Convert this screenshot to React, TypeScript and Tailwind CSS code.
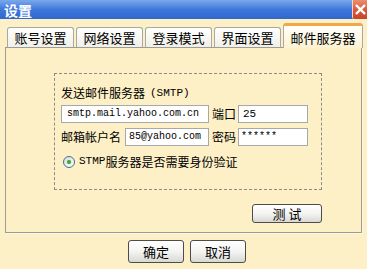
import clsx from 'clsx'

const TABS = ['账号设置', '网络设置', '登录模式', '界面设置']

const cjk = "font-['SimSun','Noto_Sans_CJK_SC',sans-serif]"
const mono = "font-['Liberation_Mono','Noto_Sans_CJK_SC',monospace]"

function XpButton({ label, className }: { label: string; className?: string }) {
  return (
    <button
      type="button"
      className={clsx(
        'flex items-center justify-center rounded-[3px] border border-[#4c4c4c] bg-gradient-to-b from-white via-[#f4f4f2] to-[#d8d8d4] text-[13px] leading-none text-black',
        cjk,
        className,
      )}
    >
      {label}
    </button>
  )
}

export default function App() {
  return (
    <div className={clsx('flex h-[269px] w-[367px] flex-col overflow-hidden bg-[#fdefc6]', cjk)}>
      {/* title bar */}
      <div className="flex h-[19px] shrink-0 items-center justify-between bg-gradient-to-b from-[#7aa8ec] via-[#3f78da] to-[#2f67ce]">
        <span className="pl-[4px] text-[14px] font-bold leading-none text-white">设置</span>
        <div className="flex h-[19px] w-[15px] items-center justify-start overflow-hidden rounded-bl-[2px] border-l border-[#f6d4c8] bg-gradient-to-b from-[#ec8e70] via-[#d95a3c] to-[#c8442a] pl-[1px]">
          <svg width="15" height="13" viewBox="0 0 15 13">
            <path d="M3 2 L12 11 M12 2 L3 11" stroke="white" strokeWidth="2.6" strokeLinecap="round" />
          </svg>
        </div>
      </div>

      {/* tabs */}
      <div className="mt-[4px] flex h-[24px] items-end pl-[7px]">
        {TABS.map((t) => (
          <div
            key={t}
            className="mr-[2px] flex h-[20px] w-[67px] items-center justify-center rounded-t-[3px] border border-b-0 border-[#a9a9a0] bg-gradient-to-b from-white to-[#f0efe8] text-[13px] leading-none text-black"
          >
            {t}
          </div>
        ))}
        <div className="relative z-10 -mb-px flex h-[25px] w-[80px] items-center justify-center rounded-t-[3px] border border-b-0 border-[#a9a9a0] border-t-[3px] border-t-[#f0a848] bg-gradient-to-b from-[#fffffb] to-[#fdf3d2] pt-[1px] text-[13px] leading-none text-black">
          邮件服务器
        </div>
      </div>

      {/* panel */}
      <div className="ml-[5px] flex h-[186px] w-[357px] flex-col border border-[#9c9c94] bg-[#fdefc6] shadow-[1px_1px_0_#fff8e0]">
        <div className="ml-[48px] mt-[25px] h-[117px] w-[268px] border border-dashed border-[#8c8c84] pl-[6px] pt-[12px] text-[12px] leading-none text-black">
          <div className="flex h-[14px] items-center">
            发送邮件服务器<span className={clsx('ml-[5px] text-[11px]', mono)}>(SMTP)</span>
          </div>
          <div className="mt-[5px] flex h-[18px] items-center">
            <div className={clsx('flex h-[18px] w-[148px] items-center border border-[#a5a9ab] bg-white pl-[5px] text-[10px]', mono)}>
              smtp.mail.yahoo.com.cn
            </div>
            <span className="ml-[3px] w-[26px]">端口</span>
            <div className={clsx('flex h-[18px] w-[70px] items-center border border-[#a5a9ab] bg-white pl-[4px] text-[11px]', mono)}>
              25
            </div>
          </div>
          <div className="mt-[5px] flex h-[18px] items-center">
            <span className="w-[64px]">邮箱帐户名</span>
            <div className={clsx('flex h-[18px] w-[84px] items-center border border-[#a5a9ab] bg-white pl-[3px] text-[10px]', mono)}>
              85@yahoo.com
            </div>
            <span className="ml-[3px] w-[26px]">密码</span>
            <div className={clsx('flex h-[18px] w-[70px] items-center border border-[#a5a9ab] bg-white pl-[2px] text-[10px]', mono)}>
              ******
            </div>
          </div>
          <div className="mt-[9px] flex h-[13px] items-center pl-[2px]">
            <div className="flex h-[12px] w-[12px] items-center justify-center rounded-full border border-[#3e6f99] bg-gradient-to-br from-[#dcdcd4] to-white">
              <div className="h-[4px] w-[4px] rounded-full bg-[#3fa63a] shadow-[0_0_1px_#7fd07a]" />
            </div>
            <span className={clsx('ml-[4px] text-[11px]', mono)}>STMP</span>
            <span>服务器是否需要身份验证</span>
          </div>
        </div>
        <div className="mt-[14px] flex justify-end pr-[39px]">
          <XpButton label="测 试" className="h-[19px] w-[70px]" />
        </div>
      </div>

      {/* footer buttons */}
      <div className="mt-[7px] flex gap-[6px] pl-[128px]">
        <XpButton label="确定" className="h-[23px] w-[56px]" />
        <XpButton label="取消" className="h-[23px] w-[56px]" />
      </div>
    </div>
  )
}
